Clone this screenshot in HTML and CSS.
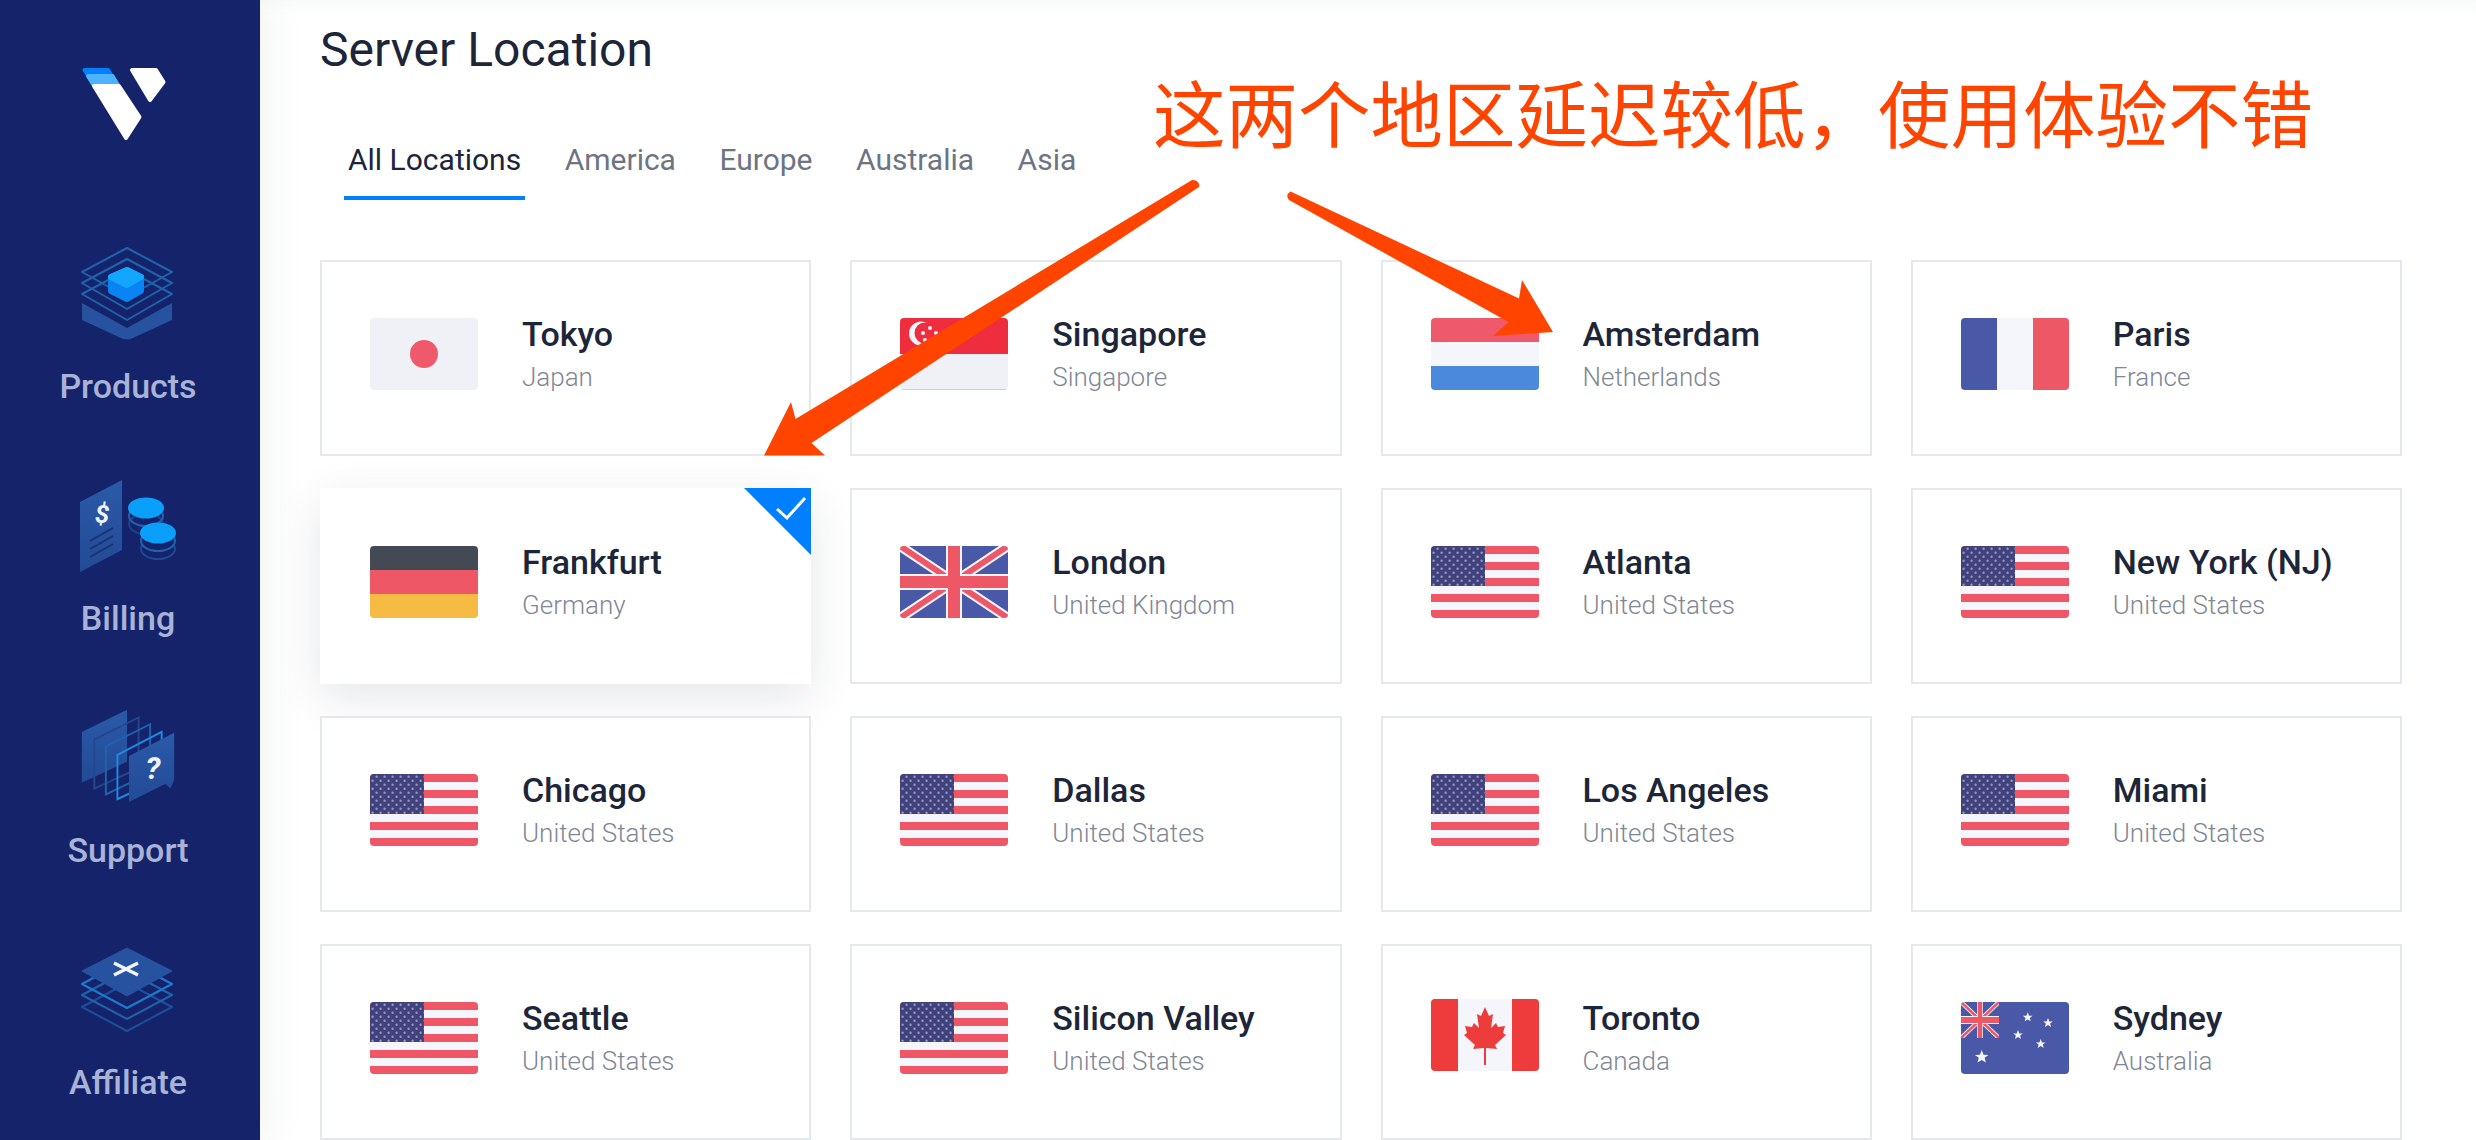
FILE: index.html
```html
<!DOCTYPE html>
<html lang="en">
<head>
<meta charset="utf-8">
<title>Server Location</title>
<link rel="stylesheet" href="styles.css">
</head>
<body>
<svg class="defs" aria-hidden="true">
  <defs>
    <linearGradient id="plate" x1="0" y1="0" x2="0" y2="1"><stop offset="0" stop-color="#2a5aa8"/><stop offset="1" stop-color="#234a95"/></linearGradient>
    <pattern id="usdots" width="8" height="8" patternUnits="userSpaceOnUse">
      <circle cx="2.6" cy="6.7" r="1.2" fill="#9296c4"/>
      <circle cx="6.6" cy="2.7" r="1.2" fill="#9296c4"/>
    </pattern>
    <polygon id="star" points="0,-5 1.3,-1.6 4.8,-1.5 2.1,0.6 3,4 0,2.1 -3,4 -2.1,0.6 -4.8,-1.5 -1.3,-1.6" fill="#f5f6fb"/>
    <symbol id="f-jp" viewBox="0 0 108 72" preserveAspectRatio="none">
      <rect width="108" height="72" fill="#f0f1f6"/><circle cx="54" cy="36" r="14" fill="#ee5a6c"/>
    </symbol>
    <symbol id="f-sg" viewBox="0 0 108 72" preserveAspectRatio="none">
      <rect width="108" height="72" fill="#f0f1f6"/><rect width="108" height="36" fill="#ee2d3e"/><rect y="71" width="108" height="1" fill="#f3c2c9"/>
      <circle cx="21" cy="15.5" r="12" fill="#f5f6fb"/><circle cx="25" cy="15" r="10.5" fill="#ee2d3e"/>
      <g fill="#f5f6fb"><circle cx="30" cy="10" r="2"/><circle cx="23" cy="15" r="2"/><circle cx="36" cy="15" r="2"/><circle cx="25" cy="22" r="2"/><circle cx="33" cy="22" r="2"/></g>
    </symbol>
    <symbol id="f-nl" viewBox="0 0 108 72" preserveAspectRatio="none">
      <rect width="108" height="24" fill="#ee5a6c"/><rect y="24" width="108" height="24" fill="#f5f6fb"/><rect y="48" width="108" height="24" fill="#4a89dc"/>
    </symbol>
    <symbol id="f-fr" viewBox="0 0 108 72" preserveAspectRatio="none">
      <rect width="36" height="72" fill="#4a58a8"/><rect x="36" width="36" height="72" fill="#f5f6fb"/><rect x="72" width="36" height="72" fill="#ee5766"/>
    </symbol>
    <symbol id="f-de" viewBox="0 0 108 72" preserveAspectRatio="none">
      <rect width="108" height="24" fill="#434a54"/><rect y="24" width="108" height="24" fill="#ee5766"/><rect y="48" width="108" height="24" fill="#f6bb42"/>
    </symbol>
    <symbol id="f-uk" viewBox="0 0 108 72" preserveAspectRatio="none">
      <rect width="108" height="72" fill="#4a58a8"/>
      <path d="M0 0L108 72M108 0L0 72" stroke="#f5f6fb" stroke-width="10"/>
      <path d="M0 0L108 72M108 0L0 72" stroke="#ee5766" stroke-width="6"/>
      <path d="M54 0V72M0 36H108" stroke="#f5f6fb" stroke-width="16"/>
      <path d="M54 0V72M0 36H108" stroke="#ee5766" stroke-width="12"/>
    </symbol>
    <symbol id="f-us" viewBox="0 0 108 72" preserveAspectRatio="none">
      <rect width="108" height="72" fill="#ef5766"/>
      <g fill="#f5f6fb"><rect y="8" width="108" height="8"/><rect y="24" width="108" height="8"/><rect y="40" width="108" height="8"/><rect y="56" width="108" height="8"/></g>
      <rect width="54" height="40" fill="#41417c"/><rect width="54" height="40" fill="url(#usdots)"/>
    </symbol>
    <symbol id="f-ca" viewBox="0 0 108 72" preserveAspectRatio="none">
      <rect width="108" height="72" fill="#f5f6fb"/><rect width="27" height="72" fill="#ee3c3c"/><rect x="81" width="27" height="72" fill="#ee3c3c"/>
      <path d="M54 8L58 17L62 15L60 29L65 24L67 28L74 27L72 34L75 36L64 46L66 50L55 49V66H53V49L42 50L44 46L33 36L36 34L34 27L41 28L43 24L48 29L46 15L50 17Z" fill="#ee3c3c"/>
    </symbol>
    <symbol id="f-au" viewBox="0 0 108 72" preserveAspectRatio="none">
      <rect width="108" height="72" fill="#4a58a8"/>
      <use href="#f-uk" width="38" height="36"/>
      <use href="#star" x="66.7" y="15.3"/><use href="#star" x="87" y="21"/><use href="#star" x="57" y="33"/>
      <use href="#star" x="79.7" y="42"/><use href="#star" transform="translate(20.7 55) scale(1.4)"/>
    </symbol>
  </defs>
</svg>

<div class="page">
  <nav class="sidebar">
    <svg class="logo" viewBox="78 64 100 80" aria-label="Vultr">
      <path d="M84.5 70H108L113 78H89.5Z" class="logo-blue"/>
      <path d="M88 76H112.5L118 85H93.5Z" class="logo-sky"/>
      <path d="M94 86H119L139.500 117L126 138Z" class="logo-white"/>
      <path d="M132 70H156L163.500 82L150 100Z" class="logo-white"/>
    </svg>

    <a class="nav-item">
      <svg class="nav-icon" viewBox="78 240 100 100">
        <path d="M82 303L127 328L172 303V320L133 338Q127 341 121 338L82 320Z" fill="#27529f"/>
        <g fill="none" stroke="#1f62ad" stroke-width="2" stroke-linejoin="round">
          <path d="M127 248L172 272L127 297L82 272Z"/>
          <path d="M127 259L172 283L127 309L82 283Z"/>
          <path d="M127 270L172 294L127 320L82 294Z"/>
        </g>
        <path d="M127 270L141 277V291L127 299L111 291V277Z" fill="#0b84f3" stroke="#0b84f3" stroke-width="6" stroke-linejoin="round"/>
        <path d="M127 270L141 277L127 285L111 277Z" fill="#13a6ff" stroke="#13a6ff" stroke-width="6" stroke-linejoin="round"/>
      </svg>
      <span class="nav-label">Products</span>
    </a>

    <a class="nav-item">
      <svg class="nav-icon" viewBox="78 472 100 100">
        <path d="M80 502L122 480V550L80 572Z" fill="url(#plate)"/>
        <text x="102" y="523" class="icon-mark icon-dollar">$</text>
        <path d="M90 541L113 528M90 549L113 536M90 557L113 544" stroke="#1b3272" stroke-width="2" fill="none"/>
        <g fill="none" stroke="#1f62ad" stroke-width="2">
          <ellipse cx="146" cy="524" rx="17" ry="10" opacity=".5"/>
          <ellipse cx="146" cy="516" rx="17" ry="10"/>
        </g>
        <ellipse cx="146" cy="508" rx="18" ry="10.500" fill="#0aa0fa"/>
        <g fill="#15246a" stroke="#1f62ad" stroke-width="2">
          <ellipse cx="158" cy="549" rx="17" ry="10" opacity=".6"/>
          <ellipse cx="158" cy="541" rx="17" ry="10"/>
        </g>
        <ellipse cx="158" cy="533" rx="18" ry="10.500" fill="#0aa0fa"/>
      </svg>
      <span class="nav-label">Billing</span>
    </a>

    <a class="nav-item">
      <svg class="nav-icon" viewBox="78 704 100 104">
        <path d="M80 733L127 710V764L80 786Z" fill="url(#plate)"/>
        <g fill="none" stroke-width="2">
          <path d="M93 741L139 718V771L93 792Z" stroke="#22478f"/>
          <path d="M105 748L151 725V776L105 798Z" stroke="#1f62ad"/>
          <path d="M117 757L163 733V781L117 803Z" stroke="#1e8ae6"/>
        </g>
        <path d="M129 758L176 734V783L172 792L167 787L129 806Z" fill="url(#plate)"/>
        <text x="154" y="782" class="icon-mark icon-question">?</text>
      </svg>
      <span class="nav-label">Support</span>
    </a>

    <a class="nav-item">
      <svg class="nav-icon" viewBox="78 936 100 100">
        <g fill="none" stroke-width="2" stroke-linejoin="round">
          <path d="M127 983L172 1007L127 1031L82 1007Z" stroke="#1b4f9c"/>
          <path d="M127 971L172 995L127 1019L82 995Z" stroke="#1f62ad"/>
          <path d="M127 960L172 984L127 1008L82 984Z" stroke="#1e7ad0"/>
        </g>
        <path d="M127 948L172 971L127 996L82 971Z" fill="#27529f" stroke="#27529f" stroke-linejoin="round"/>
        <path d="M114 963L138 975M138 963L114 975" stroke="#f3f5fb" stroke-width="3.500"/>
      </svg>
      <span class="nav-label">Affiliate</span>
    </a>
  </nav>

  <main class="main">
    <h1 class="title">Server Location</h1>
    <ul class="tabs">
      <li class="tab is-active">All Locations</li>
      <li class="tab">America</li>
      <li class="tab">Europe</li>
      <li class="tab">Australia</li>
      <li class="tab">Asia</li>
    </ul>

    <div class="grid">
      <div class="card"><svg class="flag"><use href="#f-jp"/></svg><div class="info"><div class="city">Tokyo</div><div class="country">Japan</div></div></div>
      <div class="card"><svg class="flag"><use href="#f-sg"/></svg><div class="info"><div class="city">Singapore</div><div class="country">Singapore</div></div></div>
      <div class="card"><svg class="flag"><use href="#f-nl"/></svg><div class="info"><div class="city">Amsterdam</div><div class="country">Netherlands</div></div></div>
      <div class="card"><svg class="flag"><use href="#f-fr"/></svg><div class="info"><div class="city">Paris</div><div class="country">France</div></div></div>

      <div class="card is-selected">
        <svg class="flag"><use href="#f-de"/></svg><div class="info"><div class="city">Frankfurt</div><div class="country">Germany</div></div>
        <svg class="corner" viewBox="0 0 67 67"><path d="M0 0H67V67Z" fill="#0080ff"/><path d="M33 21L43 30L61 10" fill="none" stroke="#fff" stroke-width="3"/></svg>
      </div>
      <div class="card"><svg class="flag"><use href="#f-uk"/></svg><div class="info"><div class="city">London</div><div class="country">United Kingdom</div></div></div>
      <div class="card"><svg class="flag"><use href="#f-us"/></svg><div class="info"><div class="city">Atlanta</div><div class="country">United States</div></div></div>
      <div class="card"><svg class="flag"><use href="#f-us"/></svg><div class="info"><div class="city">New York (NJ)</div><div class="country">United States</div></div></div>

      <div class="card"><svg class="flag"><use href="#f-us"/></svg><div class="info"><div class="city">Chicago</div><div class="country">United States</div></div></div>
      <div class="card"><svg class="flag"><use href="#f-us"/></svg><div class="info"><div class="city">Dallas</div><div class="country">United States</div></div></div>
      <div class="card"><svg class="flag"><use href="#f-us"/></svg><div class="info"><div class="city">Los Angeles</div><div class="country">United States</div></div></div>
      <div class="card"><svg class="flag"><use href="#f-us"/></svg><div class="info"><div class="city">Miami</div><div class="country">United States</div></div></div>

      <div class="card"><svg class="flag"><use href="#f-us"/></svg><div class="info"><div class="city">Seattle</div><div class="country">United States</div></div></div>
      <div class="card"><svg class="flag"><use href="#f-us"/></svg><div class="info"><div class="city">Silicon Valley</div><div class="country">United States</div></div></div>
      <div class="card"><svg class="flag flag-raised"><use href="#f-ca"/></svg><div class="info"><div class="city">Toronto</div><div class="country">Canada</div></div></div>
      <div class="card"><svg class="flag"><use href="#f-au"/></svg><div class="info"><div class="city">Sydney</div><div class="country">Australia</div></div></div>
    </div>
  </main>

  <svg class="arrows" viewBox="0 0 2476 1140" aria-hidden="true">
    <path d="M1192 180Q1200 180 1199 187L811.500 443L825 455.500H764L791 402L795.500 419Z"/>
    <path d="M1290.500 191.500L1519 298.500L1522 280L1553 332L1493 336L1508.500 322L1289 200Q1285 195 1290.500 191.500Z"/>
  </svg>
  <div class="annotation">这两个地区延迟较低，使用体验不错</div>
</div>
</body>
</html>
```
FILE: styles.css
```css
* { box-sizing: border-box; }
html, body { margin: 0; padding: 0; }
body { font-family: Roboto, "Liberation Sans", sans-serif; background: #fff; overflow: hidden; }
.defs { position: absolute; width: 0; height: 0; }

.page { position: relative; display: flex; width: 2476px; height: 1140px; overflow: hidden; }

.sidebar {
  flex: 0 0 260px;
  display: flex;
  flex-direction: column;
  align-items: center;
  gap: 64px;
  padding: 64px 4px 0 0;
  background: #15246a;
  box-shadow: 0 0 44px rgba(30, 50, 70, .09);
  position: relative;
  z-index: 1;
}
.logo { width: 100px; height: 80px; margin-bottom: 32px; }
.logo-blue { fill: #0080ff; stroke: #0080ff; stroke-width: 4; stroke-linejoin: round; }
.logo-sky { fill: #4db2ff; stroke: #4db2ff; stroke-width: 4; stroke-linejoin: round; }
.logo-white { fill: #fff; stroke: #fff; stroke-width: 4; stroke-linejoin: round; }

.nav-item { display: flex; flex-direction: column; align-items: center; }
.nav-icon { width: 100px; height: 100px; overflow: visible; }
.nav-label { margin-top: 24px; font-size: 34px; line-height: 44px; font-weight: 500; color: #a9b3d7; }
.icon-mark { fill: #f0f3fa; font-family: Roboto, sans-serif; font-weight: 700; text-anchor: middle; font-style: italic; }
.icon-dollar { font-size: 26px; }
.icon-question { font-size: 32px; }

.main {
  flex: 1;
  padding: 22px 74px 0 60px;
  box-shadow: inset 0 16px 20px -16px rgba(30, 50, 70, .05);
}
.title { margin: 0; font-size: 48px; line-height: 56px; font-weight: 400; color: #1d2639; }

.tabs { display: flex; gap: 35.5px; list-style: none; margin: 62px 0 60px 24px; padding: 0; }
.tab { padding: 0 4px 16px; font-size: 30px; line-height: 40px; color: #6d7482; border-bottom: 4px solid transparent; }
.tab.is-active { color: #1d2639; border-bottom-color: #0080ff; }

.grid { display: grid; grid-template-columns: repeat(4, 1fr); grid-auto-rows: 196px; gap: 32px 39px; }
.card {
  position: relative;
  display: flex;
  align-items: flex-start;
  gap: 44px;
  padding: 56px 0 0 48px;
  background: #fff;
  border: 2px solid #e5e9ec;
}
.card.is-selected { border-color: #fff; box-shadow: 0 14px 44px rgba(30, 40, 60, .11); }
.corner { position: absolute; top: -2px; right: -2px; width: 67px; height: 67px; }

.flag { flex: none; width: 108px; height: 72px; border-radius: 4px; overflow: hidden; }
.flag-raised { margin-top: -3px; }

.city { font-size: 34px; line-height: 32px; font-weight: 500; color: #1d2639; white-space: nowrap; }
.country { margin-top: 9px; font-size: 26px; line-height: 36px; font-weight: 300; color: #7f8796; white-space: nowrap; }

.arrows { position: absolute; left: 0; top: 0; width: 2476px; height: 1140px; z-index: 2; pointer-events: none; }
.arrows path { fill: #ff4400; }

.annotation {
  position: absolute;
  left: 1153px;
  top: 69px;
  z-index: 2;
  font-family: "Noto Sans CJK SC", sans-serif;
  font-size: 72.5px;
  line-height: 84px;
  font-weight: 400;
  color: #ff4400;
  white-space: nowrap;
}
```
